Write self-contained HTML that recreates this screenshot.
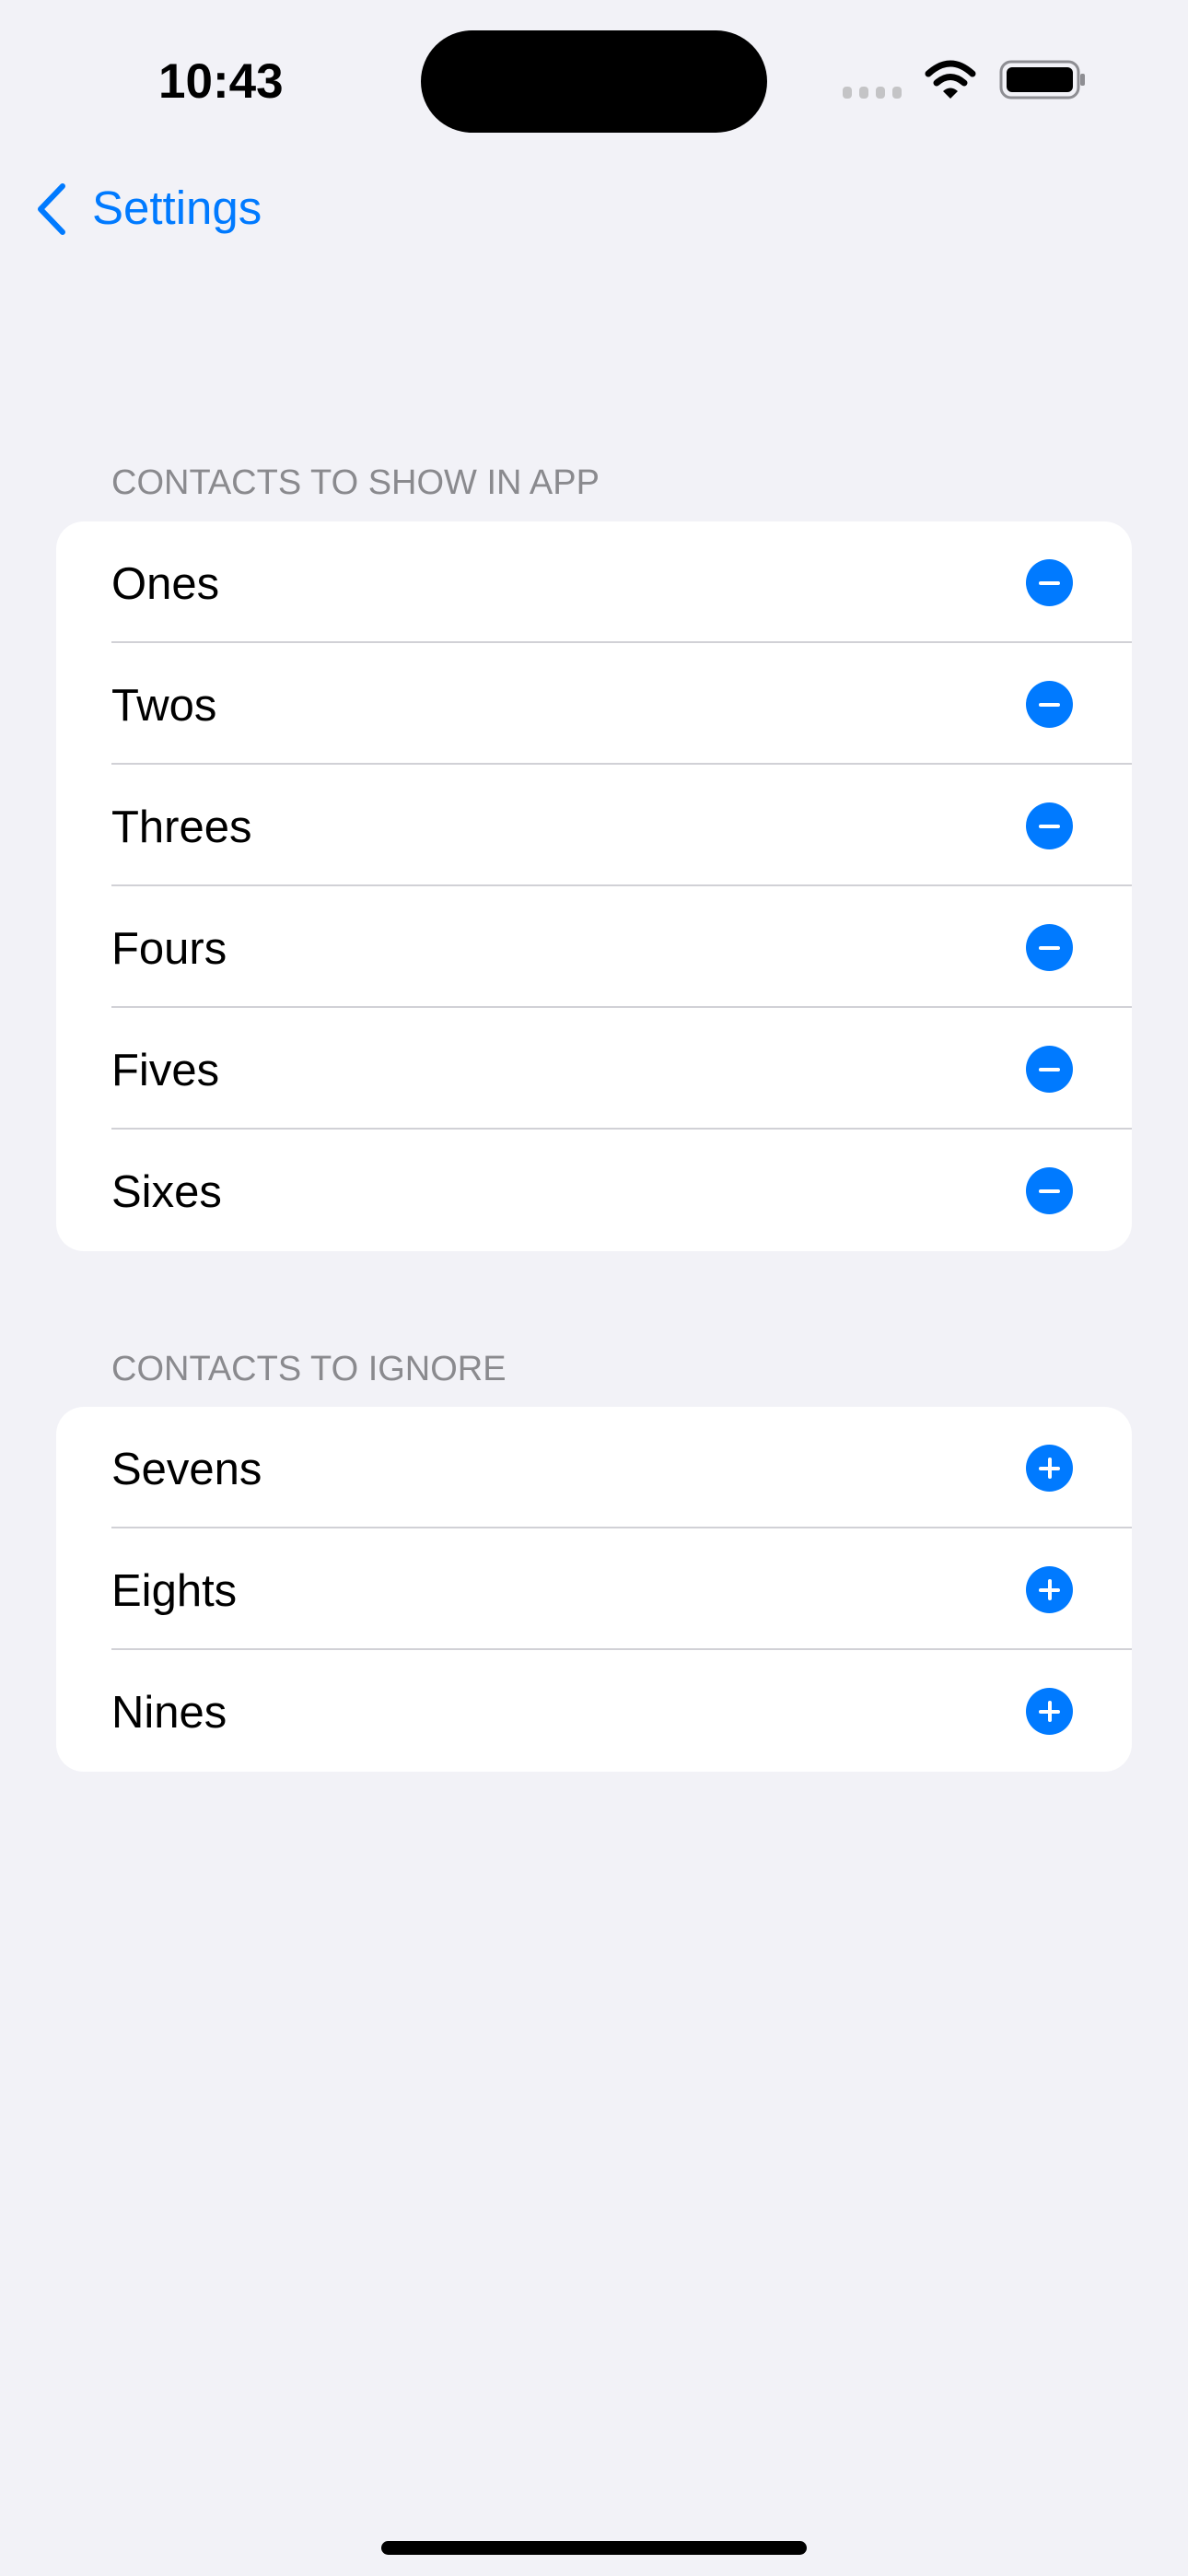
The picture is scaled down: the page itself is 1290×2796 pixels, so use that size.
<!DOCTYPE html>
<html><head><meta charset="utf-8"><style>
*{margin:0;padding:0;box-sizing:border-box}
body{width:1290px;height:2796px;background:#f2f2f7;font-family:"Liberation Sans",sans-serif;position:relative;overflow:hidden}
.abs{position:absolute}
.time{left:172px;top:58px;font-size:53px;font-weight:bold;color:#000}
.island{left:457px;top:33px;width:376px;height:111px;background:#000;border-radius:56px}
.back{left:100px;top:196px;font-size:51px;color:#007aff}
.hdr{left:121px;font-size:38px;color:#8a8a8e}
.card{left:61px;width:1168px;background:#fff;border-radius:30px;overflow:hidden}
.row{height:132px;position:relative}
.row span{position:absolute;left:60px;top:40px;font-size:49px;color:#000}
.row:not(:last-child)::after{content:"";position:absolute;left:60px;right:0;bottom:0;height:2px;background:#d1d1d6}
.ic{position:absolute;left:1053px;top:41px;width:51px;height:51px;border-radius:50%;background:#007aff}
.ic::before{content:"";position:absolute;left:14px;top:23.5px;width:23px;height:4px;background:#fff;border-radius:2px}
.plus::after{content:"";position:absolute;left:23.5px;top:14px;width:4px;height:23px;background:#fff;border-radius:2px}
</style></head><body>
<div class="abs time">10:43</div>
<div class="abs island"></div>
<svg class="abs" style="left:910px;top:60px" width="280" height="60" viewBox="910 60 280 60">
<g fill="#c4c4c6"><rect x="915" y="94" width="10" height="13" rx="4"/><rect x="933" y="94" width="10" height="13" rx="4"/><rect x="951" y="94" width="10" height="13" rx="4"/><rect x="969" y="94" width="10" height="13" rx="4"/></g>
<g fill="none" stroke="#000" stroke-width="7" stroke-linecap="round"><path d="M1008 80 Q1032 58 1056 80"/><path d="M1017 90 Q1032 77 1047 90"/></g>
<path d="M1024 99 Q1032 92 1040 99 L1032 107 Z" fill="#000"/>
<rect x="1087" y="67" width="84" height="39" rx="11" fill="none" stroke="#8e8e93" stroke-width="3"/>
<rect x="1093" y="73" width="72" height="27" rx="6" fill="#000"/>
<rect x="1173" y="80" width="5" height="13" rx="2" fill="#8e8e93"/>
</svg>
<svg class="abs" style="left:36px;top:196px" width="40" height="62"><path d="M32 6 L8 31 L32 56" fill="none" stroke="#007aff" stroke-width="6" stroke-linecap="round" stroke-linejoin="round"/></svg>
<div class="abs back">Settings</div>
<div class="abs hdr" style="top:503px">CONTACTS TO SHOW IN APP</div>
<div class="abs card" style="top:566px">
<div class="row"><span>Ones</span><div class="ic"></div></div>
<div class="row"><span>Twos</span><div class="ic"></div></div>
<div class="row"><span>Threes</span><div class="ic"></div></div>
<div class="row"><span>Fours</span><div class="ic"></div></div>
<div class="row"><span>Fives</span><div class="ic"></div></div>
<div class="row"><span>Sixes</span><div class="ic"></div></div>
</div>
<div class="abs hdr" style="top:1465px">CONTACTS TO IGNORE</div>
<div class="abs card" style="top:1527px">
<div class="row"><span>Sevens</span><div class="ic plus"></div></div>
<div class="row"><span>Eights</span><div class="ic plus"></div></div>
<div class="row"><span>Nines</span><div class="ic plus"></div></div>
</div>
<div class="abs" style="left:414px;top:2758px;width:462px;height:15px;border-radius:8px;background:#000"></div>
</body></html>
